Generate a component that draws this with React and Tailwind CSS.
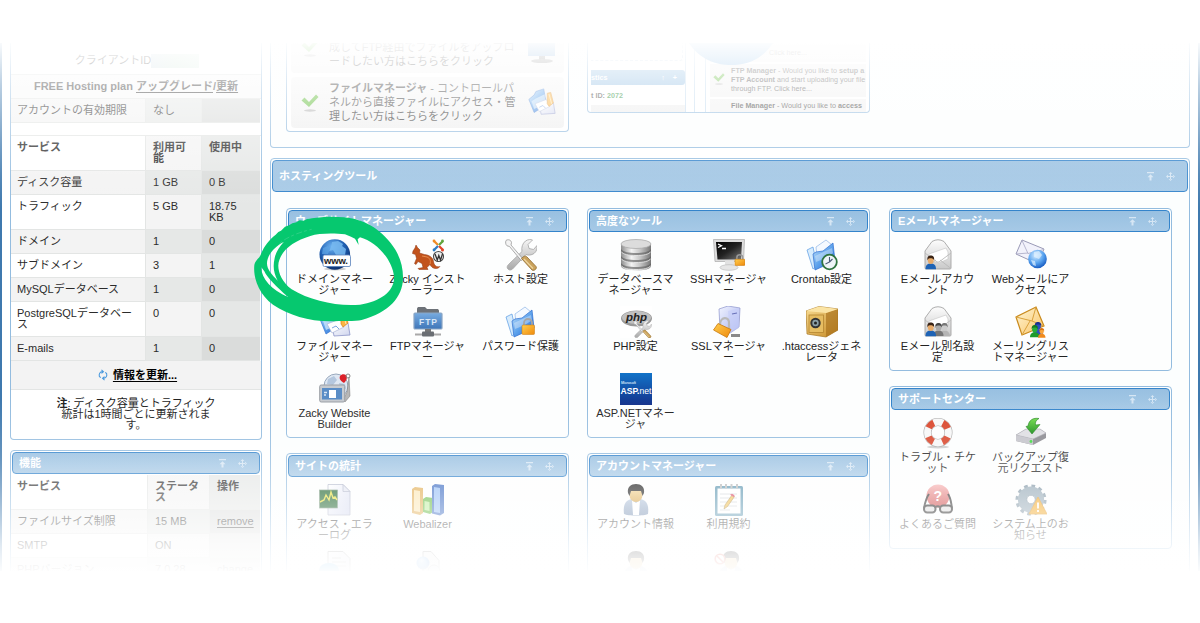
import React from "react";

/* ---------- shared gradients ---------- */
function Defs() {
  const g = (id, stops, x2 = "0", y2 = "1") => (
    <linearGradient id={id} x1="0" y1="0" x2={x2} y2={y2}>
      {stops.map(([o, c]) => (
        <stop key={o} offset={o} stopColor={c} />
      ))}
    </linearGradient>
  );
  return (
    <svg width="0" height="0" className="absolute">
      <defs>
        {g("metal", [[0, "#8d8d8d"], [0.35, "#f4f4f4"], [0.65, "#c4c4c4"], [1, "#777"]], "1", "0")}
        {g("metalV", [[0, "#f6f6f6"], [1, "#a8a8a8"]])}
        {g("folder", [[0, "#c7e4fb"], [0.5, "#5ea3ec"], [1, "#1f5fd0"]], "1", "1")}
        {g("gold", [[0, "#f9dc92"], [1, "#c58a24"]], "1", "1")}
        {g("lock", [[0, "#ffce4e"], [1, "#ef8a0c"]], "1", "1")}
        {g("screen", [[0, "#77abe0"], [1, "#3f76b8"]])}
        {g("black", [[0, "#000"], [0.5, "#222"], [1, "#777"]], "1", "1")}
        {g("asp", [[0, "#1173c8"], [1, "#15338c"]])}
        {g("env", [[0, "#fdfdfd"], [1, "#c9c9c9"]])}
        {g("envGold", [[0, "#fff6d6"], [1, "#f9c465"]], "1", "1")}
        {g("server", [[0, "#f0f3ff"], [1, "#a9b3ee"]], "1", "1")}
        {g("green", [[0, "#6fdb4a"], [1, "#138a13"]])}
        {g("page", [[0, "#ffffff"], [1, "#cfd5ee"]], "1", "1")}
        {g("jacket", [[0, "#b2c4dc"], [1, "#6b86aa"]])}
        {g("skin", [[0, "#f6d99a"], [1, "#d59f3e"]])}
        {g("red", [[0, "#f7b0b0"], [1, "#c73232"]])}
        <radialGradient id="globe" cx="0.4" cy="0.25" r="0.8">
          <stop offset="0" stopColor="#6fb4f2" />
          <stop offset="0.5" stopColor="#2061b4" />
          <stop offset="1" stopColor="#0a2a66" />
        </radialGradient>
        <radialGradient id="globeLight" cx="0.4" cy="0.3" r="0.7">
          <stop offset="0" stopColor="#d5ecff" />
          <stop offset="0.6" stopColor="#58a3ef" />
          <stop offset="1" stopColor="#1b5fc4" />
        </radialGradient>
      </defs>
    </svg>
  );
}

const Svg = ({ children, size = 32 }) => (
  <svg width={size} height={size} viewBox="0 0 32 32" className="block shrink-0">
    {children}
  </svg>
);

/* ---------- icon fragments ---------- */
const Padlock = ({ x, y, s = 1, r = 0 }) => (
  <g transform={`translate(${x} ${y}) scale(${s}) rotate(${r})`}>
    <path d="M2.500 6V3.200a3 3 0 0 1 6 0V6" fill="none" stroke="#9a9a9a" strokeWidth="1.600" />
    <rect x="0.500" y="5" width="10.500" height="6.500" rx="0.800" fill="url(#lock)" stroke="#c9780b" strokeWidth="0.600" />
  </g>
);

const Person = ({ x, y, s = 1, coat = "#1e63b5", hair = "#3a2416", skin = "#e8ab6a" }) => (
  <g transform={`translate(${x} ${y}) scale(${s})`}>
    <path d="M0 13c0-4 2-5.500 5-5.500s5 1.500 5 5.500z" fill={coat} />
    <ellipse cx="5" cy="4.500" rx="2.800" ry="3.500" fill={skin} />
    <path d="M1.800 4.500C1.500 1 3 0 5 0s3.600 1 3.200 4.500C7.500 2.600 6 2.500 4 2.600 3 2.700 2.300 3.300 1.800 4.500z" fill={hair} />
  </g>
);

const FolderShape = () => (
  <>
    <path d="M10 8L20 1l6 5v17L12 28z" fill="#f4f9ff" stroke="#8fb6e6" strokeWidth="0.700" />
    <path d="M1 11l6-3 4 19-4 3z" fill="#d7ecfd" stroke="#6aa5e6" strokeWidth="0.800" />
    <path d="M7 15l3-2 7-1L27 4l2 18L9 31z" fill="url(#folder)" stroke="#2e6fd0" strokeWidth="0.700" />
    <path d="M9 17L26 9l1 5c-6 5-12 7-17 9z" fill="#fff" opacity="0.350" />
  </>
);

const ToolsShape = () => (
  <>
    <path d="M3.500 30.500c-2-1.500-1.500-3.500 0-5L17 12.500c-.8-4 .5-8 3.500-10.500C23 .3 26 .3 27.500 1l-4.500 4.500 1 4 4.500 1L32 6.500c.6 3-.5 6-3 8-2.500 1.800-6 2-8 1L8.500 29c-1.500 2-3.500 2.500-5 1.500z" fill="url(#metalV)" stroke="#a5a5a5" strokeWidth="0.800" />
    <path d="M1 1.500C3 0 6 .8 6.500 3.500L6 6l12 14-1.800 1.600L4.500 7.500 2 6.800C.5 5.500.3 3 1 1.500z" fill="#f4f4f4" stroke="#999" strokeWidth="0.800" />
    <path d="M16.500 19.500c2-2.500 4-3 5.500-1.500l9 9.500c1.500 2-2 5-4 3.500z" fill="#caa25c" stroke="#8f6a2d" strokeWidth="0.800" />
    <path d="M19 20l9 9.500" stroke="#eed69f" strokeWidth="1.200" />
  </>
);

const FilesShape = () => (
  <>
    <path d="M1 13l6-5 2-4 9-3 3 18-14 9z" fill="url(#folder)" stroke="#3674cf" strokeWidth="0.700" />
    <path d="M4 15l5-3 10-5 1 11-13 6z" fill="#d9ecfc" opacity="0.700" />
    <path d="M13 19l16-2 2 12-16 1z" fill="url(#page)" stroke="#8d96c8" strokeWidth="0.800" />
    <path d="M8 18l13-5 4 8-12 6z" fill="#fff" stroke="#a9b5d6" strokeWidth="0.700" />
    <path d="M22 6l4-1 3 12-5 4-2-3z" fill="#fbb544" stroke="#d8851a" strokeWidth="0.700" />
    <path d="M24 7l3 11" stroke="#ffe9b2" strokeWidth="1" />
    <path d="M13 22l4-2 3 3" stroke="#7ea5e0" strokeWidth="1" fill="none" />
  </>
);

const EnvelopeShape = () => (
  <>
    <path d="M3 12L10 2.500Q16-1 22 2.500L29 12v17a1 1 0 0 1-1 1H4a1 1 0 0 1-1-1z" fill="url(#env)" stroke="#a5a5a5" strokeWidth="0.900" />
    <path d="M7 15l17-6 2 4v7l-9 4-10-2z" fill="#fff" stroke="#c4c4c4" strokeWidth="0.600" />
    <path d="M3 14l12 9h2l12-9M3 29.500L14 21M29 29.500L18 21" fill="none" stroke="#b9b9b9" strokeWidth="0.900" />
  </>
);

/* ---------- tool icons ---------- */
const icons = {
  domain: (
    <>
      <ellipse cx="16" cy="30" rx="11" ry="1.500" fill="#999" opacity="0.500" />
      <circle cx="15.800" cy="15.500" r="15.300" fill="url(#globe)" />
      <path d="M13 3l6-1 5 3-1 2 4 3-1 6h-9l-3-5-4 1 2-4z" fill="#78baf0" opacity="0.850" />
      <path d="M4 9l5-2 2 3-2 5H3z" fill="#5ea5e6" opacity="0.700" />
      <rect x="4" y="16" width="27.500" height="11.500" rx="1.500" fill="#fff" stroke="#5882bb" strokeWidth="0.800" />
      <text x="5" y="25" fontSize="9.500" fontWeight="bold" fontFamily="Liberation Sans" fill="#222" textLength="24">www.</text>
    </>
  ),
  zacky: (
    <>
      <path d="M1 12L3 9 4 6l1.500 2.500L8 11l-.5 3 5 1.500c5 .5 8.500 3 9 7 .5 4 3 6 6.500 5-2 3-8 3-10-2l-3 3 1 2h-9l-1-1 5-1-1-4-4-2-2 3-1.500-1 2-5-1-4-3-1z" fill="#c2531c" stroke="#8c3510" strokeWidth="0.500" />
      <path d="M10 17l5 1c3 1 4 4 3 7" fill="none" stroke="#e58a4c" strokeWidth="1" />
      <g fill="none" strokeWidth="2.300">
        <path d="M22 2l4 4" stroke="#f08a24" />
        <path d="M31 2l-4 4" stroke="#62a53d" />
        <path d="M22 11l4-4" stroke="#2e7cc4" />
        <path d="M31 11l-4-4" stroke="#e2452b" />
      </g>
      <circle cx="30.500" cy="11" r="1.500" fill="#e2452b" />
      <circle cx="22" cy="2" r="1.400" fill="#f08a24" />
      <circle cx="30.500" cy="2" r="1.400" fill="#62a53d" />
      <circle cx="22" cy="11" r="1.400" fill="#2e7cc4" />
      <circle cx="26.500" cy="17.500" r="5" fill="#eee" stroke="#4a4a4a" strokeWidth="1.100" />
      <path d="M23 15l2.300 6 1.500-4.500 1.700 4.500 2-6" fill="none" stroke="#333" strokeWidth="1.300" />
    </>
  ),
  host: <ToolsShape />,
  files: <FilesShape />,
  ftp: (
    <>
      <path d="M5 3c0-1.500 1-2 2-2h6l2 2h10c1 0 2 .5 2 2v5H5z" fill="#6d7278" />
      <rect x="2" y="7" width="28" height="16" rx="1" fill="url(#screen)" stroke="#8aa5c4" strokeWidth="1.200" />
      <path d="M13 23h6v4h-6z" fill="#777" />
      <path d="M3 27.500h26v2H3z" fill="#a9a9a9" />
      <rect x="10" y="25.500" width="12" height="5" rx="1" fill="#6a6e73" />
      <text x="7" y="18.500" fontSize="8.500" fontWeight="bold" fontFamily="Liberation Sans" fill="#d8e6f6" textLength="18">FTP</text>
    </>
  ),
  password: (
    <>
      <FolderShape />
      <path d="M19 20v-3a4 4 0 0 1 8 0v3" fill="none" stroke="#a5a5a5" strokeWidth="1.800" />
      <rect x="17" y="19" width="12.500" height="9.500" rx="1" fill="url(#lock)" stroke="#c9780b" strokeWidth="0.500" />
    </>
  ),
  builder: (
    <>
      <circle cx="17" cy="13" r="12" fill="#dfe8f3" stroke="#99a9bd" strokeWidth="1" />
      <path d="M9 6l6-3 3 4-4 5-6-1zM20 10l6 1 1 5-6-2z" fill="#b4c7de" />
      <path d="M30 4l1 19-5 6-2-2 4-8z" fill="#b7b7b7" stroke="#777" strokeWidth="0.500" />
      <path d="M21 3c2-3 7-2 7 1s-3 6-3 6-6-3-4-7z" fill="#dc2028" />
      <circle cx="29" cy="3" r="2" fill="none" stroke="#888" strokeWidth="1" />
      <rect x="0.700" y="12" width="25" height="17" rx="1.500" fill="#c7cbd0" stroke="#9a9fa6" strokeWidth="1" />
      <rect x="3" y="15" width="20" height="11.500" fill="#5a8dc6" />
      <rect x="10" y="17" width="7" height="8" fill="#fff" />
      <path d="M5 19.500h3M5 22h2" stroke="#dbe8f6" strokeWidth="1.300" fill="none" />
    </>
  ),
  database: (
    <>
      <path d="M1 5v22c0 3 7 4.500 15 4.500S31 30 31 27V5z" fill="url(#metal)" />
      {[5, 12, 19].map((y) => (
        <g key={y}>
          <path d={`M1 ${y + 5}c2 3 8 4 15 4s13-1 15-4v2.500c-2 3-8 4-15 4s-13-1-15-4z`} fill="#5f5f5f" opacity="0.650" />
          <path d={`M1 ${y + 7.500}c2 3 8 4 15 4s13-1 15-4`} stroke="#eee" strokeWidth="0.800" fill="none" />
        </g>
      ))}
      <ellipse cx="16" cy="5" rx="15" ry="4.500" fill="#dcdcdc" stroke="#a5a5a5" strokeWidth="0.700" />
    </>
  ),
  ssh: (
    <>
      <path d="M0.500 0.500h31l-1 22H2z" fill="#ddd" stroke="#aaa" strokeWidth="0.700" />
      <path d="M3 3h26l-1 17.500H4.500z" fill="url(#black)" />
      <path d="M5 5l3.500 1.800L5 8.500M9 9.500h4" stroke="#fff" strokeWidth="1.300" fill="none" />
      <path d="M12 22h9v5h-9z" fill="#e2e2e2" />
      <ellipse cx="16" cy="28.500" rx="9" ry="2.800" fill="#e6e6e6" stroke="#bbb" strokeWidth="0.700" />
      <Padlock x={21.500} y={15.500} s={0.950} />
    </>
  ),
  cron: (
    <>
      <FolderShape />
      <circle cx="23.500" cy="23" r="7.300" fill="#eef4f8" stroke="#2f7440" strokeWidth="1.800" />
      <path d="M23.500 18v5l-4 2M23.500 23l3-3" stroke="#4a5b77" strokeWidth="1.100" fill="none" />
    </>
  ),
  php: (
    <>
      <rect width="32" height="32" fill="#fff" />
      <ellipse cx="16.500" cy="12.500" rx="15.500" ry="8" fill="#9a9a9a" />
      <ellipse cx="16.500" cy="11.500" rx="14.500" ry="6.500" fill="#c0c0c0" />
      <text x="6" y="14.500" fontSize="11.500" fontStyle="italic" fontWeight="bold" fontFamily="Liberation Sans" fill="#222" textLength="21">php</text>
      <g transform="translate(13.500 14.500) scale(0.560)"><ToolsShape /></g>
    </>
  ),
  ssl: (
    <>
      <path d="M6 3L15 0l12 2-1 19-9 6-10-3z" fill="url(#server)" stroke="#8d94cc" strokeWidth="0.700" />
      <path d="M15 5l11-3v20l-9 5z" fill="#c5cdf8" opacity="0.600" />
      <path d="M19 8l5-1" stroke="#6972b8" strokeWidth="1.200" />
      <path d="M18 28h9v3h-9z" fill="#8a8a8a" />
      <path d="M7 19c0-9 10-9 9-1v6" fill="none" stroke="#b9b9b9" strokeWidth="2.200" />
      <path d="M5 17.500l13 6-4 8L.5 24z" fill="url(#lock)" stroke="#c9780b" strokeWidth="0.800" />
    </>
  ),
  htaccess: (
    <>
      <path d="M0 5L13 0.500 32 3v21l-12 7L1 28z" fill="url(#gold)" stroke="#a87722" strokeWidth="0.700" />
      <path d="M20 7l12-4v21l-12 7z" fill="#a8701b" opacity="0.650" />
      <path d="M0 5L13 .5 32 3 20 7z" fill="#fbe4a4" />
      <rect x="3" y="9" width="14.500" height="17.500" fill="#e6bd62" stroke="#b58531" strokeWidth="0.800" />
      <circle cx="9.500" cy="17" r="5.200" fill="#333" />
      <circle cx="9.500" cy="17" r="3.200" fill="#8ba0a8" />
      <circle cx="9.500" cy="17" r="1.500" fill="#222" />
    </>
  ),
  asp: (
    <>
      <rect width="32" height="32" fill="url(#asp)" />
      <text x="1" y="10.800" fontSize="3.500" fontWeight="bold" fontFamily="Liberation Sans" fill="#cfe2f7" textLength="15">Microsoft</text>
      <text x="0.500" y="20.500" fontSize="9.500" fontWeight="bold" fontFamily="Liberation Sans" fill="#fff" textLength="31" lengthAdjust="spacingAndGlyphs">
        ASP.<tspan fontWeight="normal">net</tspan>
      </text>
    </>
  ),
  mailAccount: (
    <>
      <EnvelopeShape />
      <Person x={3.500} y={16.500} s={1.050} />
    </>
  ),
  webmail: (
    <>
      <path d="M7 1l22 9-6 15L1 15z" fill="#f2f2fb" stroke="#8e8eae" strokeWidth="0.900" />
      <path d="M7 1.500l6 13 16-4M1 15l12-1" fill="none" stroke="#b0b0ca" strokeWidth="0.900" />
      <circle cx="22.500" cy="20" r="9.300" fill="url(#globeLight)" />
      <path d="M19 13l5-1 3 4-3 4-5-2zM16 21l4 1 1 5-3-1z" fill="#dff1ff" opacity="0.700" />
    </>
  ),
  alias: (
    <>
      <EnvelopeShape />
      <Person x={17.500} y={17} s={1} coat="#b5b5b5" hair="#777" skin="#ccc" />
      <Person x={11.500} y={17} s={1} coat="#777" hair="#444" skin="#aaa" />
      <Person x={3.500} y={16.500} s={1.050} />
    </>
  ),
  mailing: (
    <>
      <path d="M1 11L21 1l8 19-22 9z" fill="url(#envGold)" stroke="#c98a1c" strokeWidth="1.200" />
      <path d="M1 11l16 4L21 1M7 29l8-14M29 20l-12-5" fill="none" stroke="#d9a13c" strokeWidth="1" />
      <Person x={18} y={16} s={1} coat="#2d4fc0" hair="#1a2f8e" skin="#2d4fc0" />
      <Person x={15} y={19} s={0.950} coat="#1d9a2b" hair="#137a1f" skin="#27ae3a" />
      <Person x={23} y={22} s={0.750} coat="#f08a1c" hair="#dd7410" skin="#f9a53b" />
    </>
  ),
  ticket: (
    <>
      <ellipse cx="16" cy="30" rx="11" ry="1.500" fill="#aaa" opacity="0.600" />
      <circle cx="16" cy="15.500" r="10.500" fill="none" stroke="#a5a5a5" strokeWidth="8" />
      <circle cx="16" cy="15.500" r="10.500" fill="none" stroke="#f7f7f7" strokeWidth="6.800" />
      <circle cx="16" cy="15.500" r="10.500" fill="none" stroke="#d9452a" strokeWidth="7" strokeDasharray="7.200 9.293" strokeDashoffset="-4.650" />
    </>
  ),
  backup: (
    <>
      <path d="M1 18l10-6h14l6 4v5L18 28 1 24z" fill="#8a8a90" />
      <path d="M1 18l10-6h14l6 4-13 6z" fill="#dedee3" stroke="#aaaab2" strokeWidth="0.600" />
      <path d="M1 18l17 4v6L1 24z" fill="#c3c3ca" />
      <circle cx="16" cy="24.500" r="1.400" fill="#3bdc3b" />
      <path d="M13 9c1-6 5-8.500 11-7.500-3 1.500-4 4-3.500 6.500L25 7.500 17 17 11 9.500z" fill="url(#green)" stroke="#177a17" strokeWidth="0.600" />
    </>
  ),
  faq: (
    <>
      <circle cx="16" cy="12" r="11.500" fill="url(#red)" />
      <text x="11.500" y="17" fontSize="14" fontWeight="bold" fontFamily="Liberation Sans" fill="#fff">?</text>
      <path d="M7 10c-3 4-4 9-5 14M26 10c3 4 3 9 4 14" stroke="#222" strokeWidth="2" fill="none" />
      <rect x="2" y="21.500" width="11.500" height="7" rx="3.200" fill="#ddd" stroke="#111" strokeWidth="2" />
      <rect x="18" y="21.500" width="12" height="7" rx="3.200" fill="#ddd" stroke="#111" strokeWidth="2" />
      <path d="M13 23q3-1.500 5 0" stroke="#111" strokeWidth="1.800" fill="none" />
    </>
  ),
  notice: (
    <>
      <circle cx="16" cy="16" r="13.800" fill="none" stroke="#7d93a3" strokeWidth="3.500" strokeDasharray="3.600 3.626" />
      <circle cx="16" cy="15.500" r="8.600" fill="none" stroke="#91a6b4" strokeWidth="9" />
      <circle cx="16" cy="15.500" r="4.200" fill="#fff" stroke="#6d8494" strokeWidth="0.700" />
      <path d="M23 13l9 17H14z" fill="#f2a51c" stroke="#dd8f10" strokeWidth="0.800" />
      <path d="M23 18.500v6M23 26v2" stroke="#fff" strokeWidth="1.800" />
    </>
  ),
  accessLog: (
    <>
      <path d="M9 0.500h15l7 7V31H9z" fill="url(#page)" stroke="#a8aec4" strokeWidth="0.800" />
      <path d="M24 .5v7h7z" fill="#e3e6f2" stroke="#a8aec4" strokeWidth="0.800" />
      <rect x="0.500" y="6" width="18" height="18" fill="#0f5a1f" stroke="#6d8d74" strokeWidth="0.700" />
      <path d="M1 18l4-2 2-5 3 5 2-8 2 6 2-1 2 3" stroke="#e5dc2a" strokeWidth="1.400" fill="none" />
    </>
  ),
  webalizer: (
    <>
      <path d="M0 5l3-2 8 1v25l-3 2-8-2z" fill="#e0a94a" /><path d="M2 6l6 1v21l-6-1z" fill="#fbe5b0" />
      <path d="M11 15l3-2 7 1v14l-3 2-7-2z" fill="#5cb637" /><path d="M12.500 17l5 1v9l-5-1z" fill="#b9ec97" />
      <path d="M20 2l3-2 9 1v28l-4 2.500-8-2z" fill="#3667c0" /><path d="M22 3l6 1v25l-6-1z" fill="#92bcf5" />
    </>
  ),
  account: (
    <>
      <path d="M4 30c-1-9 1-13 7-15h10c6 2 8 6 7 15-4 2-20 2-24 0z" fill="url(#jacket)" />
      <path d="M12 16l4 3 4-3-1 15h-6z" fill="#fff" />
      <ellipse cx="16" cy="11" rx="6.500" ry="7" fill="url(#skin)" />
      <path d="M8 9c-1-6 3-9 8-9s9 3 8 9l-1.500 3-1.500-5H11l-1.500 5z" fill="#161616" />
    </>
  ),
  terms: (
    <>
      <rect x="2" y="2" width="28" height="30" rx="1.500" fill="#5591ad" />
      <rect x="4.500" y="4.500" width="23" height="25" fill="#fff" />
      <path d="M7 10h17M7 14h17M7 18h17M7 22h17M7 26h10" stroke="#c7ccd1" strokeWidth="0.800" />
      <path d="M8 0v4.500M13 0v4.500M18.500 0v4.500M24 0v4.500" stroke="#b5b5b5" strokeWidth="2" />
      <path d="M11 25l1-4 7-10 2.500 1.500-7 10z" fill="#efbb45" stroke="#9c7420" strokeWidth="0.600" />
      <path d="M17 10.800l2-1 2.500 1.500-.5 2z" fill="#d83a5a" />
    </>
  ),
  logPage: (
    <>
      <path d="M9 0.500h15l7 7V31H9z" fill="url(#page)" stroke="#8a8a8a" />
      <path d="M13 7h9M13 11h14M13 15h14" stroke="#999" />
      <ellipse cx="10" cy="19" rx="10" ry="7" fill="#3ba4e6" />
    </>
  ),
  statsPage: (
    <>
      <path d="M11 0.500h8l8 9V31H11z" fill="#ececec" stroke="#8a8a8a" />
      <circle cx="11" cy="12" r="6.500" fill="url(#globeLight)" />
      <circle cx="22" cy="20" r="6" fill="#d0d5de" stroke="#888" />
    </>
  ),
};
icons.accountHolder = icons.account;
icons.accountBlocked = (
  <>
    <g transform="translate(2 0)">{icons.account}</g>
    <circle cx="7" cy="8" r="4.800" fill="#fff" stroke="#dd4a3a" strokeWidth="1.600" />
    <path d="M4 5l6 6" stroke="#dd4a3a" strokeWidth="1.500" />
  </>
);

/* ---------- building blocks ---------- */
function HeaderControls() {
  return (
    <div className="ml-auto flex items-center gap-3 text-[#d6e6f4]">
      <svg width="7" height="9" viewBox="0 0 7 9">
        <path d="M0 0h7v1.300H0zM3.500 2.200L6.500 5.200H4.500V8.500h-2V5.200H.5z" fill="currentColor" />
      </svg>
      <svg width="9" height="9" viewBox="0 0 9 9">
        <path d="M4 1.500h1V4h2.500v1H5v2.500H4V5H1.500V4H4zM4.500 0l1.800 2H2.700zM4.500 9l1.800-2H2.700zM0 4.500l2-1.800v3.600zM9 4.500l-2-1.800v3.600z" fill="currentColor" />
      </svg>
    </div>
  );
}

function TitleBar({ title, tall }) {
  return (
    <div
      className={
        "m-px flex shrink-0 items-center rounded-[4px] border border-[#3484cb] bg-linear-to-b from-[#98c0e1] to-[#a6c9e6] pr-3 pl-1.5 font-bold text-white " +
        (tall ? "h-8" : "h-[22px]")
      }
    >
      <span>{title}</span>
      <HeaderControls />
    </div>
  );
}

function Tool({ icon, lines }) {
  return (
    <div className="flex h-[67px] w-[93px] flex-col items-center text-center text-[#222]">
      <Svg>{icons[icon]}</Svg>
      <div className="mt-[3px]">
        {lines.map((l) => (
          <div key={l} className="h-[11px] whitespace-nowrap">{l}</div>
        ))}
      </div>
    </div>
  );
}

function ToolPanel({ title, tools, height }) {
  return (
    <section className={"flex w-[283px] flex-col rounded-[4px] border border-[#93bcdf] bg-[#fdfefe] " + height}>
      <TitleBar title={title} />
      <div className="mt-1.5 ml-px grid grid-cols-[93px_93px_93px]">
        {tools.map(([icon, ...lines]) => (
          <Tool key={icon} icon={icon} lines={lines} />
        ))}
      </div>
    </section>
  );
}

function Row({ cells, shade, bold, tall, cols }) {
  const h = tall ? "h-[35px]" : "h-6";
  const a = shade ? "bg-[#f3f3f3]" : "bg-white";
  const b = shade ? "bg-[#e6e8e7]" : "bg-[#f4f4f4]";
  const c = shade ? "bg-[#dadcdb]" : "bg-[#e5e7e6]";
  const cell = "border-b border-[#e3e5e4] pt-[6px] ";
  const lines = (v) => v.split("\n").map((s, i) => <div key={i} className="h-[11px] whitespace-nowrap">{s}</div>);
  return (
    <div className={"mr-px grid " + cols + " " + h + (bold ? " font-bold" : "")}>
      <div className={cell + "border-r pl-[6px] " + a}>{lines(cells[0])}</div>
      <div className={cell + "border-r pl-[7px] " + b}>{lines(cells[1])}</div>
      <div className={cell + "pl-[7px] " + c}>
        {cells[3] ? <span className="underline underline-offset-2">{cells[2]}</span> : lines(cells[2])}
      </div>
    </div>
  );
}

const usage = [
  ["ディスク容量", "1 GB", "0 B"],
  ["トラフィック", "5 GB", "18.75\nKB"],
  ["ドメイン", "1", "0"],
  ["サブドメイン", "3", "1"],
  ["MySQLデータベース", "1", "0"],
  ["PostgreSQLデータベー\nス", "0", "0"],
  ["E-mails", "1", "0"],
];

const U_COLS = "grid-cols-[135px_56px_58px]";
const F_COLS = "grid-cols-[137px_62px_50px]";

function Sidebar() {
  return (
    <aside className="flex w-[252px] shrink-0 flex-col text-[#2b2b2b]">
      <section className="h-[397px] shrink-0 rounded-b-[4px] border border-t-0 border-[#93bcdf] bg-white">
        <div className="flex h-8 items-center justify-center border-b border-[#e3e5e4] pt-1 pl-0.5">
          <span>クライアントID</span>
          <span className="h-3.5 w-12 bg-linear-to-r from-[#cfdfe6] via-[#d5e9dc] to-[#dff0e6]" />
        </div>
        <div className="flex h-6 items-center justify-center border-b border-[#e3e5e4] bg-[#f8f8f8] font-bold">
          <span className="whitespace-pre">FREE Hosting plan </span>
          <span className="underline underline-offset-2">アップグレード</span>/
          <span className="underline underline-offset-2">更新</span>
        </div>
        <Row cells={["アカウントの有効期限", "なし", ""]} shade cols={U_COLS} />
        <div className="h-[13px] border-b border-[#e3e5e4]" />
        <Row cells={["サービス", "利用可\n能", "使用中"]} bold tall cols={U_COLS} />
        {usage.map((r, i) => (
          <Row key={r[0]} cells={r} shade={i % 2 === 0} tall={r.join("").includes("\n")} cols={U_COLS} />
        ))}
        <div className="flex h-[29px] items-center justify-center gap-[5px] border-b border-[#e3e5e4] bg-[#f3f3f3] pl-[3px] font-bold text-black">
          <svg width="10" height="12" viewBox="0 0 11 12" fill="none" stroke="#4b9ade" strokeWidth="1.200">
            <path d="M5 2.200C2 2.400.8 5 1.500 7.500L3 9M3.800.3L6 2.300 3.800 4.300M6 9.800C9 9.600 10.200 7 9.500 4.500L8 3M7.200 11.700L5 9.700l2.200-2" />
          </svg>
          <span className="underline underline-offset-2">情報を更新...</span>
        </div>
        <div className="pt-2 text-center text-[#222]">
          <div className="h-[11px]"><b>注</b>: ディスク容量とトラフィック</div>
          <div className="h-[11px]">統計は1時間ごとに更新されま</div>
          <div className="h-[11px]">す。</div>
        </div>
      </section>
      <section className="mt-2.5 h-[160px] shrink-0 rounded-t-[4px] border border-[#93bcdf] bg-white">
        <TitleBar title="機能" />
        <Row cells={["サービス", "ステータ\nス", "操作"]} bold tall cols={F_COLS} />
        <Row cells={["ファイルサイズ制限", "15 MB", "remove", 1]} shade cols={F_COLS} />
        <Row cells={["SMTP", "ON", ""]} cols={F_COLS} />
        <Row cells={["PHPバージョン", "7.0.28", "change", 1]} shade cols={F_COLS} />
      </section>
    </aside>
  );
}

const Check = ({ w = 18 }) => (
  <svg width={w} height={w} viewBox="0 0 18 18" className="shrink-0">
    <ellipse cx="9" cy="16.500" rx="6" ry="1.200" fill="#b5b5b5" />
    <path d="M0.500 6.500l3-3L8 8 15 .5 17.500 3 8 13z" fill="#5fbb36" />
  </svg>
);

function QuickStart() {
  return (
    <div className="h-[89px] w-[283px] rounded-b-[4px] border border-t-0 border-[#93bcdf] bg-white px-1 text-[#333]">
      <div className="flex h-[30px] items-end rounded-b-[4px] bg-[#f3f3f3] pb-[5px]">
        <div className="-mt-1 ml-[10px] self-start"><Check /></div>
        <div className="ml-[10px] w-[187px] leading-[14px]">
          <div className="h-3.5 whitespace-nowrap">成してFTP経由でファイルをアップロ</div>
          <div className="h-3.5 whitespace-nowrap">ードしたい方はこちらをクリック</div>
        </div>
        <svg width="28" height="21" viewBox="0 0 28 21" className="ml-3 self-start">
          <rect x="0" y="0" width="27" height="13" fill="#6fa3d6" />
          <path d="M11 13h6v4h-6z" fill="#777" />
          <ellipse cx="14" cy="18" rx="11" ry="2" fill="#8b8b8b" />
        </svg>
      </div>
      <div className="mt-1 flex h-[51px] items-center rounded-[4px] bg-linear-to-b from-[#f6f6f6] to-[#efefef] pb-0.5">
        <div className="mt-0.5 ml-[10px]"><Check /></div>
        <div className="ml-[10px] w-[187px] leading-[14px]">
          <div className="h-3.5 whitespace-nowrap"><b>ファイルマネージャ</b> - コントロールパ</div>
          <div className="h-3.5 whitespace-nowrap">ネルから直接ファイルにアクセス・管</div>
          <div className="h-3.5 whitespace-nowrap">理したい方はこちらをクリック</div>
        </div>
        <div className="ml-3"><Svg size={28}>{icons.files}</Svg></div>
      </div>
    </div>
  );
}

function Preview() {
  return (
    <div className="relative ml-[18px] flex h-[70px] w-[283px] overflow-hidden rounded-b-[4px] border border-t-0 border-[#93bcdf] bg-white pr-[3px] pl-[3px] text-[7.200px] leading-[9.200px] text-[#444]">
      <div className="flex w-[95px] flex-col border-r border-[#c3dbef]">
        <div className="mr-0.5 h-[21px] rounded-br-[3px] border-r border-b border-dashed border-[#cfdfee]" />
        <div className="mt-[9px] flex h-[15px] shrink-0 items-center rounded-r-[3px] bg-[#8fbde3] pr-2 font-bold text-white">
          stics
          <span className="ml-auto flex gap-2"><span>↑</span><span>+</span></span>
        </div>
        <div className="flex h-[20px] shrink-0 items-center pt-px font-bold">
          <span className="whitespace-pre">t ID: </span><span className="text-[#258d35]">2072</span>
        </div>
        <div className="h-2 bg-[#eee]" />
      </div>
      <div className="ml-2 w-px bg-[#c3dbef]" />
      <div className="ml-2.5 flex flex-1 flex-col overflow-hidden border-l border-[#c3dbef] pl-1">
        <div className="flex h-[19px] shrink-0 items-start justify-center bg-[#f5f5f5] pt-[5px] text-[#888]">Click here...</div>
        <div className="mt-[2px] flex h-[33px] shrink-0 items-center bg-[#f1f1f1] pb-[3px]">
          <div className="w-[21px] shrink-0 pl-[3px]"><Check w={12} /></div>
          <div className="mt-[1px] whitespace-nowrap">
            <div className="h-[9.200px]"><b>FTP Manager</b> - Would you like to <b>setup a</b></div>
            <div className="h-[9.200px]"><b>FTP Account</b> and start uploading your file</div>
            <div className="h-[9.200px]">through FTP. Click here...</div>
          </div>
        </div>
        <div className="mt-[2px] flex h-[14px] shrink-0 bg-[#f1f1f1] pt-[2px]">
          <div className="w-[21px] shrink-0" />
          <div className="whitespace-nowrap"><b>File Manager</b> - Would you like to <b>access</b></div>
        </div>
      </div>
      <svg width="86" height="24" viewBox="0 0 86 24" className="absolute top-0 left-[101px]">
        <path d="M0 0C12 18 30 23 46 22 64 21 76 12 84 0z" fill="#8fc0ea" />
      </svg>
    </div>
  );
}

function Main() {
  return (
    <main className="ml-2 flex w-[920px] shrink-0 flex-col">
      <section className="flex h-[105px] shrink-0 items-start rounded-b-[4px] border border-t-0 border-[#93bcdf] bg-[#fcfefe] pl-[15px]">
        <QuickStart />
        <Preview />
      </section>
      <section className="mt-2.5 h-[430px] shrink-0 rounded-t-[4px] border border-[#93bcdf] bg-[#fcfefe]">
        <TitleBar title="ホスティングツール" tall />
        <div className="mt-4 flex pl-[15px]">
          <div className="flex flex-col gap-[15px]">
            <ToolPanel
              title="ウェブサイトマネージャー"
              height="h-[230px]"
              tools={[
                ["domain", "ドメインマネー", "ジャー"],
                ["zacky", "Zacky インスト", "ーラー"],
                ["host", "ホスト設定"],
                ["files", "ファイルマネー", "ジャー"],
                ["ftp", "FTPマネージャ", "ー"],
                ["password", "パスワード保護"],
                ["builder", "Zacky Website", "Builder"],
              ]}
            />
            <ToolPanel
              title="サイトの統計"
              height="h-[150px]"
              tools={[
                ["accessLog", "アクセス・エラ", "ーログ"],
                ["webalizer", "Webalizer"],
                [null],
                ["logPage"],
                ["statsPage"],
              ]}
            />
          </div>
          <div className="ml-[18px] flex flex-col gap-[15px]">
            <ToolPanel
              title="高度なツール"
              height="h-[230px]"
              tools={[
                ["database", "データベースマ", "ネージャー"],
                ["ssh", "SSHマネージャ", "ー"],
                ["cron", "Crontab設定"],
                ["php", "PHP設定"],
                ["ssl", "SSLマネージャ", "ー"],
                ["htaccess", ".htaccessジェネ", "レータ"],
                ["asp", "ASP.NETマネー", "ジャ"],
              ]}
            />
            <ToolPanel
              title="アカウントマネージャー"
              height="h-[150px]"
              tools={[
                ["account", "アカウント情報"],
                ["terms", "利用規約"],
                [null],
                ["accountHolder"],
                ["accountBlocked"],
              ]}
            />
          </div>
          <div className="ml-[19px] flex flex-col gap-[15px]">
            <ToolPanel
              title="Eメールマネージャー"
              height="h-[163px]"
              tools={[
                ["mailAccount", "Eメールアカウ", "ント"],
                ["webmail", "Webメールにア", "クセス"],
                [null],
                ["alias", "Eメール別名設", "定"],
                ["mailing", "メーリングリス", "トマネージャー"],
              ]}
            />
            <ToolPanel
              title="サポートセンター"
              height="h-[163px]"
              tools={[
                ["ticket", "トラブル・チケ", "ット"],
                ["backup", "バックアップ復", "元リクエスト"],
                [null],
                ["faq", "よくあるご質問"],
                ["notice", "システム上のお", "知らせ"],
              ]}
            />
          </div>
        </div>
      </section>
    </main>
  );
}

/* Hand-drawn marker ring around the domain manager tool */
function Scribble() {
  return (
    <svg width="170" height="120" viewBox="0 0 510 360" className="absolute top-[210px] left-[245px]">
      <path
        fillRule="evenodd"
        fill="#06c86f"
        d="M48 132C58 106 74 88 92 74L100 66 108 62 120 50 132 46 142 40 154 37 164 31 176 32 186 27 200 25C240 18 290 18 330 27 352 34 384 46 402 64 450 104 475 150 474 205 473 262 432 308 350 330 330 335 290 332 255 334 190 333 132 316 84 284 42 252 24 205 28 165 32 148 42 148 48 132Z
        M345 82C395 96 443 150 447 200 449 245 405 274 345 284 275 290 196 272 140 238 104 212 94 172 103 150 114 116 150 92 196 78 222 69 268 69 300 73L318 80 330 86 341 105 338 88Z
        M49 172C48 204 78 240 130 262 92 228 66 202 58 184Z
        M66 160C66 136 88 110 116 96 102 112 92 128 89 144 83 170 86 190 98 212 80 194 66 178 66 160Z"
      />
      <path d="M104 100C122 84 156 68 200 58" fill="none" stroke="#5fd8a1" strokeWidth="1.300" strokeDasharray="9 8 18 6" />
    </svg>
  );
}

export default function App() {
  return (
    <div className="relative h-[623px] w-[1200px] overflow-hidden bg-white pt-[43px] font-['Liberation_Sans','Noto_Sans_CJK_JP',sans-serif] text-[11px] leading-[11px]">
      <Defs />
      <div className="relative flex h-[528px] overflow-hidden">
        <div className="mr-2 w-0.5 shrink-0 bg-[#3f79ae]" />
        <Sidebar />
        <Main />
        <div className="ml-2 w-0.5 shrink-0 bg-[#3f79ae]" />
        <div className="absolute inset-x-0 top-0 h-[170px] bg-[linear-gradient(to_bottom,rgba(255,255,255,0.97)_0px,rgba(255,255,255,0.84)_17px,rgba(255,255,255,0.64)_43px,rgba(255,255,255,0.5)_67px,rgba(255,255,255,0.27)_104px,rgba(255,255,255,0.12)_132px,rgba(255,255,255,0)_165px)]" />
        <div className="absolute inset-x-0 bottom-0 h-[171px] bg-[linear-gradient(to_bottom,rgba(255,255,255,0)_0px,rgba(255,255,255,0.2)_57px,rgba(255,255,255,0.38)_85px,rgba(255,255,255,0.64)_120px,rgba(255,255,255,0.84)_145px,rgba(255,255,255,0.98)_171px)]" />
      </div>
      <Scribble />
    </div>
  );
}
